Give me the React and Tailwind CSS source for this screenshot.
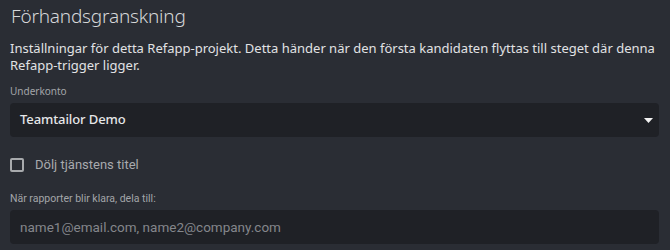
import { useState } from 'react';

export default function App() {
  const [hideTitle, setHideTitle] = useState(false);
  const [emails, setEmails] = useState('');

  return (
    <div className="h-[250px] w-[670px] overflow-hidden bg-[#2a2d34] px-[10px] pt-[2px] font-['Noto_Sans',sans-serif]">
      <h2 className="pl-px text-[19px] font-light leading-[28px] tracking-[-0.2px] text-[#d6d7d9]">Förhandsgranskning</h2>
      <p className="mt-[10px] text-[13px] leading-[17px] text-[#e1e2e4]">
        Inställningar för detta Refapp-projekt. Detta händer när den första kandidaten flyttas till steget där denna Refapp-trigger ligger.
      </p>

      <label className="mt-[10px] block text-[10px] leading-[14px] text-[#a3a5a9]">Underkonto</label>
      <div className="mt-[5px] flex h-[34px] w-[649px] items-center justify-between rounded-[4px] bg-[#1f2126] pl-[10px] pr-[6px]">
        <span className="text-[13px] font-medium tracking-[-0.1px] text-[#e6e7e9]">Teamtailor Demo</span>
        <svg width="9" height="5" viewBox="0 0 9 5">
          <path d="M0 0 H9 L4.5 5 Z" fill="#f2f2f2" />
        </svg>
      </div>

      <label className="mt-[20px] flex cursor-pointer items-center gap-[11px] font-['Roboto',sans-serif]">
        <button
          type="button"
          onClick={() => setHideTitle((v) => !v)}
          className="h-[14px] w-[14px] rounded-[2px] border-2 border-[#a8aaad]"
        />
        <span className="text-[13px] leading-[16px] text-[#a8aaad]">Dölj tjänstens titel</span>
      </label>

      <label className="mt-[19px] block font-['Roboto',sans-serif] text-[10.5px] leading-[14px] text-[#a3a5a9]">
        När rapporter blir klara, dela till:
      </label>
      <input
        value={emails}
        onChange={(e) => setEmails(e.target.value)}
        placeholder="name1@email.com, name2@company.com"
        className="mt-[4px] block h-[34px] w-[649px] rounded-[4px] bg-[#1f2126] px-[10px] font-['Roboto',sans-serif] text-[13.5px] text-[#e6e7e9] outline-none placeholder:text-[#84868b]"
      />
    </div>
  );
}
